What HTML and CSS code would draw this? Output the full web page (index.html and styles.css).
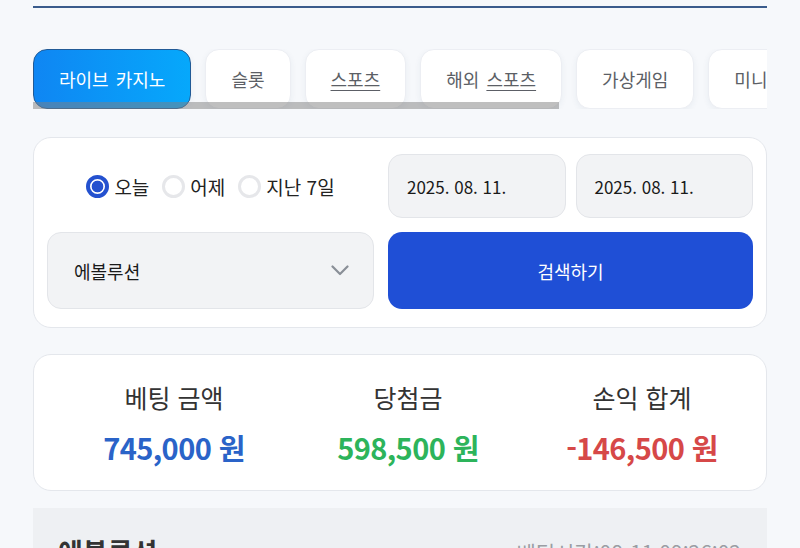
FILE: index.html
```html
<!DOCTYPE html>
<html lang="ko">
<head>
<meta charset="utf-8">
<link rel="stylesheet" href="styles.css">
</head>
<body>
<div class="page">
  <div class="topline"></div>

  <div class="tabs-wrap">
    <div class="tabs">
      <div class="tab active"><span>라이브 카지노</span></div>
      <div class="tab"><span>슬롯</span></div>
      <div class="tab"><span><u>스포츠</u></span></div>
      <div class="tab"><span>해외 <u>스포츠</u></span></div>
      <div class="tab"><span>가상게임</span></div>
      <div class="tab"><span>미니게임</span></div>
      <div class="tab"><span>홀덤</span></div>
    </div>
    <div class="scrollbar"></div>
  </div>

  <div class="card filter">
    <div class="radios">
      <label class="radio"><span class="dot on"></span>오늘</label>
      <label class="radio"><span class="dot"></span>어제</label>
      <label class="radio"><span class="dot"></span>지난 7일</label>
    </div>
    <div class="dates">
      <div class="field">2025. 08. 11.</div>
      <div class="field">2025. 08. 11.</div>
    </div>
    <div class="field select">
      <span>에볼루션</span>
      <svg width="18" height="11" viewBox="0 0 18 11"><path d="M1.5 1.5 L9 9 L16.5 1.5" fill="none" stroke="#8a8f97" stroke-width="2.2" stroke-linecap="round" stroke-linejoin="round"/></svg>
    </div>
    <button class="search">검색하기</button>
  </div>

  <div class="card summary">
    <div class="stat">
      <div class="label">베팅 금액</div>
      <div class="value blue">745,000 원</div>
    </div>
    <div class="stat">
      <div class="label">당첨금</div>
      <div class="value green">598,500 원</div>
    </div>
    <div class="stat">
      <div class="label">손익 합계</div>
      <div class="value red">-146,500 원</div>
    </div>
  </div>

  <div class="record">
    <div class="rec-title">에볼루션</div>
    <div class="rec-time">베팅시간:08-11 09:26:02</div>
  </div>
</div>
</body>
</html>
```

FILE: styles.css
```css
* { box-sizing: border-box; }
html, body {
  margin: 0;
  padding: 0;
  background: #f6f8fb;
  overflow: hidden;
}
body {
  font-family: "Noto Sans CJK KR", "Noto Sans", sans-serif;
  color: #222;
}
.page {
  padding: 0 33px;
  height: 548px;
  overflow: hidden;
}
.topline {
  height: 8px;
  border-bottom: 2px solid #3a5b8c;
}
.tabs-wrap {
  position: relative;
  margin-top: 41px;
  overflow: hidden;
}
.tabs {
  display: flex;
  gap: 14px;
  height: 60px;
}
.tab {
  flex: none;
  height: 60px;
  padding: 0 25px;
  display: flex;
  align-items: center;
  justify-content: center;
  background: #fff;
  border: 1px solid #eceef3;
  border-radius: 14px;
  font-size: 18px;
  word-spacing: 2px;
  color: #5c5f66;
  box-shadow: 0 2px 6px rgba(40, 60, 110, 0.06);
}
.tab span { white-space: nowrap; }
.tab u { text-underline-offset: 3px; text-decoration-thickness: 1px; }
.tab.active {
  background: linear-gradient(90deg, #0f86f3 0%, #06a8fb 100%);
  border: 1px solid #215a96;
  color: #fff;
}
.scrollbar {
  position: absolute;
  left: 0;
  bottom: 0;
  width: 526px;
  height: 7px;
  background: rgba(128, 128, 128, 0.5);
}
.card {
  background: #fff;
  border: 1px solid #e4e7ec;
  border-radius: 18px;
}
.filter {
  margin-top: 28px;
  padding: 16px 13px 18px;
  display: grid;
  grid-template-columns: 327px 1fr;
  grid-template-rows: 64px 77px;
  column-gap: 14px;
  row-gap: 14px;
}
.radios {
  display: flex;
  align-items: center;
  justify-content: center;
  gap: 13px;
  font-size: 19px;
  color: #222;
}
.radio {
  display: flex;
  align-items: center;
  gap: 5px;
}
.dot {
  width: 23px;
  height: 23px;
  border-radius: 50%;
  border: 3px solid #e6e7ea;
  background: #fff;
  display: inline-block;
}
.dot.on {
  border: 4px solid #2451cf;
  background: radial-gradient(circle, #2451cf 0 5.5px, #fff 6.2px);
}
.dates {
  display: grid;
  grid-template-columns: 1fr 1fr;
  gap: 10px;
}
.field {
  background: #f2f3f5;
  border: 1px solid #e3e5e9;
  border-radius: 14px;
  display: flex;
  align-items: center;
  padding: 0 18px;
  font-size: 17px;
  color: #1a1a1a;
}
.select {
  justify-content: space-between;
  padding: 0 24px 0 26px;
  font-size: 18px;
}
.search {
  border: none;
  border-radius: 14px;
  background: #1f4fd6;
  color: #fff;
  font-family: inherit;
  font-size: 18px;
}
.summary {
  margin-top: 26px;
  height: 137px;
  padding: 0 7px 0 23px;
  display: grid;
  grid-template-columns: 1fr 1fr 1fr;
  align-items: center;
}
.stat {
  text-align: center;
}
.label {
  font-size: 25px;
  color: #333;
  line-height: 32px;
}
.value {
  margin-top: 17px;
  font-size: 29px;
  font-weight: 700;
  line-height: 34px;
  letter-spacing: -0.6px;
}
.blue { color: #2a63c8; }
.green { color: #2db45b; }
.red { color: #d64848; }
.record {
  margin-top: 17px;
  height: 60px;
  background: #eef0f3;
  display: flex;
  justify-content: space-between;
  align-items: flex-start;
  padding: 25px 26px 0 25px;
}
.rec-title {
  font-size: 27px;
  font-weight: 700;
  color: #333;
  line-height: 38px;
}
.rec-time {
  font-size: 21px;
  color: #9a9da3;
  line-height: 38px;
}
```
